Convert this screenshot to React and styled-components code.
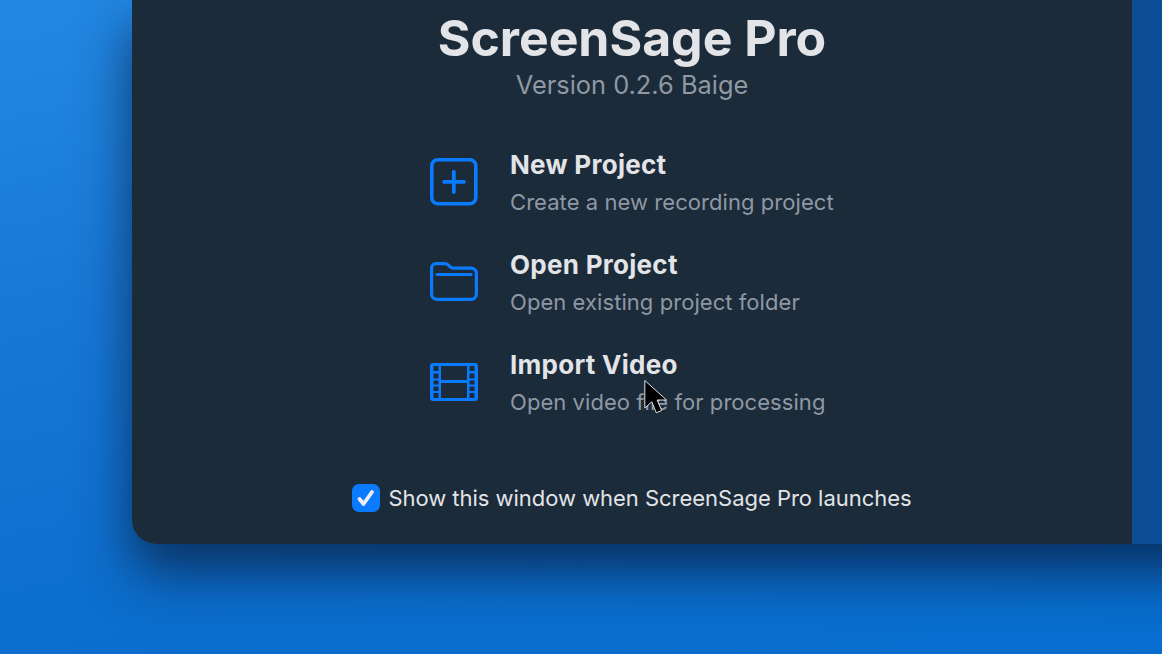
import React from "react";
import styled, { createGlobalStyle } from "styled-components";

const Global = createGlobalStyle`
  html, body { margin: 0; padding: 0; height: 100%; overflow: hidden; }
  body { font-family: Inter, "Liberation Sans", sans-serif; }
`;

const Stage = styled.div`
  position: relative;
  width: 1162px;
  height: 654px;
  overflow: hidden;
  padding-left: 132px;
  box-sizing: border-box;
  background: linear-gradient(168deg, #2388e3 0%, #1878d6 35%, #0c6ecd 70%, #076ecf 100%);
`;

const Desk = styled.div`
  display: flex;
  width: 1200px;
  height: 544px;
  border-bottom-left-radius: 24px;
  box-shadow: 0 28px 52px rgba(8, 28, 62, 0.74);
`;

const Main = styled.main`
  width: 1000px;
  flex: none;
  box-sizing: border-box;
  background: #1c2b3a;
  border-bottom-left-radius: 24px;
  display: flex;
  flex-direction: column;
  align-items: center;
  color: #e2e4e7;
`;

const Side = styled.aside`
  flex: 1;
  background: #0c4e95;
`;

const Title = styled.h1`
  margin: 9px 0 0;
  font-size: 50px;
  line-height: 58px;
  font-weight: 700;
  letter-spacing: -0.05px;
  color: #e2e4e7;
`;

const Version = styled.div`
  margin-top: 2px;
  font-size: 25.4px;
  line-height: 32px;
  font-weight: 400;
  color: #8f98a3;
`;

const List = styled.div`
  margin-top: 42px;
  width: 404px;
  display: flex;
  flex-direction: column;
  gap: 20px;
`;

const Row = styled.div`
  display: flex;
  align-items: center;
  height: 80px;
  gap: 32px;
`;

const IconBox = styled.div`
  width: 48px;
  height: 48px;
  flex: none;
  margin-top: -3px;
  color: #0a7bff;
  svg { display: block; }
`;

const Texts = styled.div`
  display: flex;
  flex-direction: column;
`;

const ItemTitle = styled.div`
  font-size: 26px;
  line-height: 36px;
  font-weight: 700;
  letter-spacing: 0.28px;
  color: #e2e4e7;
`;

const ItemDesc = styled.div`
  font-size: 22px;
  line-height: 36px;
  margin-top: 1px;
  letter-spacing: 0.06px;
  color: #8f98a3;
  white-space: nowrap;
`;

const Footer = styled.label`
  margin-top: 61px;
  display: flex;
  align-items: center;
  gap: 8px;
  font-size: 22px;
  line-height: 28px;
  letter-spacing: -0.03px;
  color: #e2e4e7;
  white-space: nowrap;
`;

const Check = styled.span`
  width: 28px;
  height: 28px;
  border-radius: 7px;
  background: #0a7bff;
  display: flex;
  align-items: center;
  justify-content: center;
`;

const Cursor = styled.svg`
  position: absolute;
  left: 640px;
  top: 377px;
`;

const PlusIcon = () => (
  <svg width="48" height="48" viewBox="0 0 48 48" fill="none" stroke="currentColor" strokeWidth="3.600">
    <rect x="1.800" y="1.800" width="44" height="44" rx="6" />
    <path d="M23.800 14v20M14 23.800h20" strokeWidth="3.800" strokeLinecap="round" />
  </svg>
);

const FolderIcon = () => (
  <svg width="48" height="48" viewBox="0 0 48 48" fill="none" stroke="currentColor" strokeWidth="3.200">
    <path d="M1.600 10a4.400 4.400 0 0 1 4.400-4.400h8.500c2.500 0 3 .6 4.500 2 1.400 1.300 2 2.500 4.500 2.500H41a5.400 5.400 0 0 1 5.400 5.400V36a5.400 5.400 0 0 1-5.400 5.400H7A5.400 5.400 0 0 1 1.600 36Z" strokeLinejoin="round" />
    <path d="M7 16.500H41" strokeWidth="3" strokeLinecap="round" />
  </svg>
);

const FilmIcon = () => (
  <svg width="48" height="48" viewBox="0 0 48 48">
    <path
      fill="currentColor"
      fillRule="evenodd"
      d="M3 5h42a3 3 0 0 1 3 3v32a3 3 0 0 1-3 3H3a3 3 0 0 1-3-3V8a3 3 0 0 1 3-3Z
         M11 8v14h26V8Z M11 25v15h26V25Z
         M3.500 8v5h5V8Z M3.500 15.500v5h5v-5Z M3.500 22.500v4h5v-4Z M3.500 28.500v4.500h5v-4.500Z M3.500 35v5h5v-5Z
         M39.500 8v5h5V8Z M39.500 15.500v5h5v-5Z M39.500 22.500v4h5v-4Z M39.500 28.500v4.500h5v-4.500Z M39.500 35v5h5v-5Z"
    />
  </svg>
);

const items = [
  { title: "New Project", desc: "Create a new recording project", Icon: PlusIcon },
  { title: "Open Project", desc: "Open existing project folder", Icon: FolderIcon },
  { title: "Import Video", desc: "Open video file for processing", Icon: FilmIcon },
];

export default function App() {
  return (
    <>
      <Global />
      <Stage>
        <Desk>
          <Main>
            <Title>ScreenSage Pro</Title>
            <Version>Version 0.2.6 Baige</Version>
            <List>
              {items.map(({ title, desc, Icon }) => (
                <Row key={title}>
                  <IconBox><Icon /></IconBox>
                  <Texts>
                    <ItemTitle>{title}</ItemTitle>
                    <ItemDesc>{desc}</ItemDesc>
                  </Texts>
                </Row>
              ))}
            </List>
            <Footer>
              <Check>
                <svg width="20" height="20" viewBox="0 0 20 20" fill="none" stroke="#eceef1" strokeWidth="3.800" strokeLinecap="round" strokeLinejoin="round">
                  <path d="M3.500 11l4 5L16 4" />
                </svg>
              </Check>
              Show this window when ScreenSage Pro launches
            </Footer>
          </Main>
          <Side />
        </Desk>
        <Cursor width="30" height="40" viewBox="0 0 30 40">
          <path d="M4.800 3.500v27.500l7-6.200 4.500 11 5.400-2.300-4.600-10.500h9.400Z" fill="#000" stroke="#dfe1e4" strokeWidth="1" strokeLinejoin="round" />
        </Cursor>
      </Stage>
    </>
  );
}
